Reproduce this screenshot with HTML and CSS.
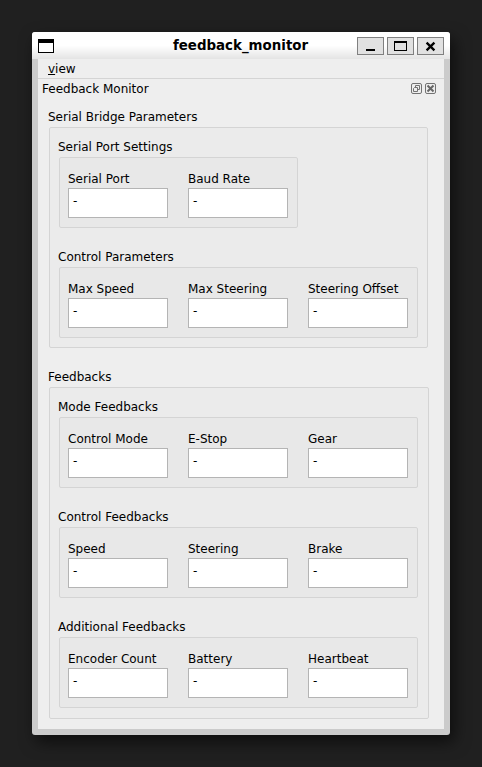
FILE: index.html
```html
<!DOCTYPE html>
<html lang="en">
<head>
<meta charset="utf-8">
<title>feedback_monitor</title>
<link rel="stylesheet" href="styles.css">
</head>
<body>
<main class="window">
  <header class="titlebar">
    <svg class="app-icon" width="16" height="14" viewBox="0 0 16 14" shape-rendering="crispEdges"><path fill="#000" d="M0 0h16v14H0z"/><path fill="#fff" d="M1 4h14v9H1z"/></svg>
    <h1 class="title">feedback_monitor</h1>
    <div class="controls">
      <button class="control" aria-label="Minimize"><svg width="25" height="16" viewBox="0 0 25 16" shape-rendering="crispEdges"><path d="M8 11h9v2H8z"/></svg></button>
      <button class="control" aria-label="Maximize"><svg width="25" height="16" viewBox="0 0 25 16" shape-rendering="crispEdges"><path fill-rule="evenodd" d="M6 3h13v10H6zM7 5v7h11V5z"/></svg></button>
      <button class="control" aria-label="Close"><svg width="25" height="16" viewBox="0 0 25 16"><path d="M8.6 4.6l7.8 7.8M16.4 4.6l-7.8 7.8" stroke="#000" stroke-width="2.3"/></svg></button>
    </div>
  </header>
  <div class="content">
    <nav class="menubar"><span class="menu"><span class="mnemonic">v</span>iew</span></nav>
    <div class="dock-title">
      <span>Feedback Monitor</span>
      <div class="dock-buttons">
        <svg width="11" height="11" viewBox="0 0 11 11" fill="none" stroke="#737373"><rect x=".5" y=".5" width="10" height="10" rx="1.5"/><path d="M4.5 4.5v-2h4v4h-2M2.5 5.5l1-1h3v4h-4z"/></svg>
        <svg width="11" height="11" viewBox="0 0 11 11" fill="none" stroke="#737373"><rect x=".5" y=".5" width="10" height="10" rx="1.5"/><path stroke="#666" stroke-width="2" d="M2.5 2.5l6 6M8.5 2.5l-6 6"/></svg>
      </div>
    </div>
    <section class="section">
      <h2 class="label">Serial Bridge Parameters</h2>
      <div class="panel panel-serial">
        <h3 class="label">Serial Port Settings</h3>
        <div class="group group-narrow">
          <div class="field"><span>Serial Port</span><div class="value">-</div></div>
          <div class="field"><span>Baud Rate</span><div class="value">-</div></div>
        </div>
        <h3 class="label">Control Parameters</h3>
        <div class="group">
          <div class="field"><span>Max Speed</span><div class="value">-</div></div>
          <div class="field"><span>Max Steering</span><div class="value">-</div></div>
          <div class="field"><span>Steering Offset</span><div class="value">-</div></div>
        </div>
      </div>
    </section>
    <section class="section">
      <h2 class="label">Feedbacks</h2>
      <div class="panel panel-feedback">
        <h3 class="label">Mode Feedbacks</h3>
        <div class="group">
          <div class="field"><span>Control Mode</span><div class="value">-</div></div>
          <div class="field"><span>E-Stop</span><div class="value">-</div></div>
          <div class="field"><span>Gear</span><div class="value">-</div></div>
        </div>
        <h3 class="label">Control Feedbacks</h3>
        <div class="group">
          <div class="field"><span>Speed</span><div class="value">-</div></div>
          <div class="field"><span>Steering</span><div class="value">-</div></div>
          <div class="field"><span>Brake</span><div class="value">-</div></div>
        </div>
        <h3 class="label">Additional Feedbacks</h3>
        <div class="group">
          <div class="field"><span>Encoder Count</span><div class="value">-</div></div>
          <div class="field"><span>Battery</span><div class="value">-</div></div>
          <div class="field"><span>Heartbeat</span><div class="value">-</div></div>
        </div>
      </div>
    </section>
  </div>
</main>
</body>
</html>
```
FILE: styles.css
```css
* { box-sizing: border-box; }
body {
  margin: 0;
  padding: 32px;
  height: 767px;
  overflow: hidden;
  background: #202020;
  color: #000;
  font: 12px/20px "DejaVu Sans", sans-serif;
}
h1, h2, h3 { margin: 0; font-size: inherit; font-weight: normal; }
svg { display: block; }
.window {
  display: flex;
  flex-direction: column;
  width: 418px;
  height: 703px;
  border-radius: 3px;
  background: #cbcbcb;
  box-shadow: 4px 7px 16px 0 rgba(0, 0, 0, .6);
  overflow: hidden;
}
.titlebar {
  display: grid;
  grid-template-columns: 84px 1fr 87px;
  align-items: start;
  height: 27px;
  padding: 5px 6px 0;
  background: linear-gradient(#fff 50%, #e4e4e4);
}
.app-icon { margin-top: 2px; }
.title {
  padding: 1px 0 0 2px;
  font-size: 13.4px;
  line-height: 16px;
  font-weight: bold;
  text-align: center;
  color: #000;
}
.controls { display: flex; gap: 3px; }
.control {
  width: 27px;
  height: 18px;
  padding: 0;
  border: 1px solid #808080;
  background: #e1e1e1;
}
.content { height: 670px; margin: 0 6px; background: #eee; }
.menubar {
  height: 20px;
  padding-left: 10px;
  border-bottom: 1px solid #d4d4d4;
}
.menu { display: block; }
.mnemonic {
  text-decoration: underline 1px;
  text-underline-offset: 1px;
}
.dock-title {
  display: flex;
  justify-content: space-between;
  height: 28px;
  padding: 0 8px 0 4px;
}
.dock-buttons { display: flex; gap: 3px; padding-top: 4px; }
.section { margin: 0 0 19px 10px; }
.label { height: 20px; }
.panel, .group {
  margin-left: 1px;
  border: 1px solid #d4d4d4;
  border-radius: 2px;
}
.panel { padding: 9px 0 0 8px; background: #ebebeb; }
.panel-serial { width: 379px; height: 221px; }
.panel-feedback { width: 380px; height: 332px; }
.group {
  display: flex;
  gap: 20px;
  width: 359px;
  height: 71px;
  margin-bottom: 19px;
  padding: 12px 8px 0;
  background: #e8e8e8;
}
.group-narrow { width: 239px; }
.field { width: 100px; line-height: 18px; }
.value {
  height: 30px;
  padding: 2px 4px;
  border: 1px solid #b4b4b4;
  background: #fff;
  line-height: 20px;
}
```
